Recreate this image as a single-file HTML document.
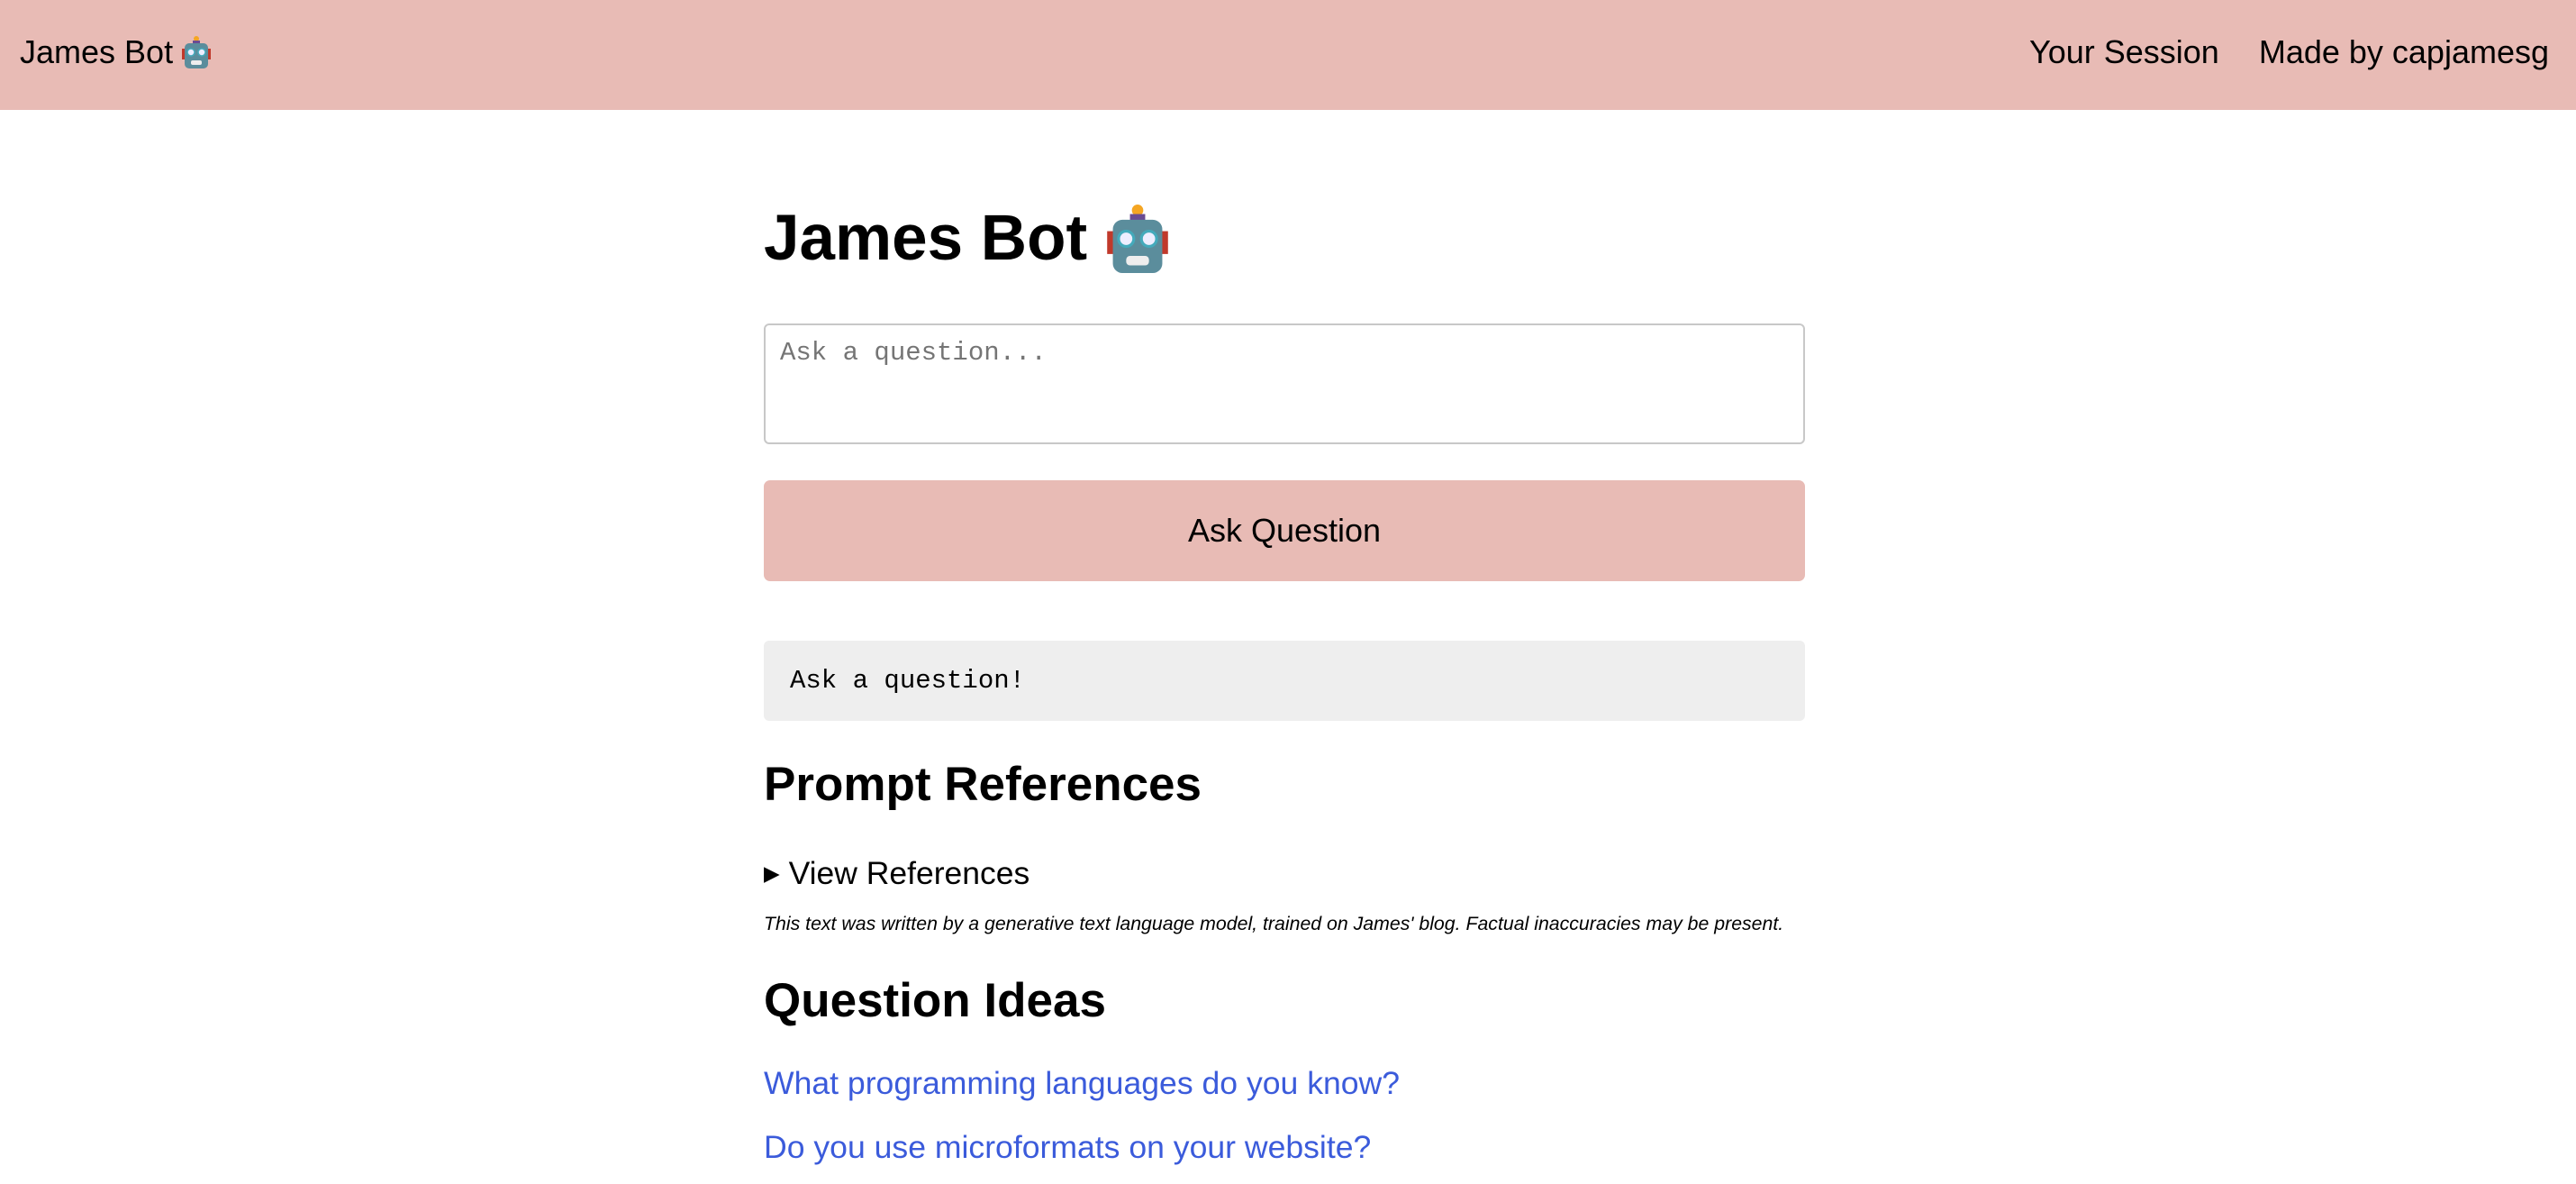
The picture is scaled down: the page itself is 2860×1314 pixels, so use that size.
<!DOCTYPE html>
<html><head><meta charset="utf-8"><style>
*{box-sizing:border-box}
body{margin:0;width:2860px;height:1314px;overflow:hidden;background:#fff;font-family:"Liberation Sans",Arial,sans-serif;color:#000}
header{height:122px;background:#e8bbb5;position:relative}
header .l{position:absolute;left:22px;top:37px;font-size:36px;display:flex;align-items:center;gap:10px}
header .r{position:absolute;right:30px;top:37px;font-size:36px}
header .r span{margin-left:44px}
main{position:absolute;left:848px;top:122px;width:1156px}
h1{font-size:71px;margin:0;position:absolute;top:102px;display:flex;align-items:center;gap:22px}
textarea{position:absolute;top:237px;left:0;width:1156px;height:134px;border:2px solid #c8c8c8;border-radius:6px;font-family:"Liberation Mono",monospace;font-size:29px;padding:14px 16px;resize:none;color:#777}
.btn{position:absolute;top:411px;left:0;width:1156px;height:112px;background:#e8bbb5;border-radius:7px;font-size:36px;display:flex;align-items:center;justify-content:center}
.out{position:absolute;top:589px;left:0;width:1156px;height:89px;background:#eee;border-radius:6px;font-family:"Liberation Mono",monospace;font-size:29px;padding:0 29px;display:flex;align-items:center}
h2{font-size:53px;margin:0;position:absolute;white-space:nowrap}
.det{position:absolute;top:827px;font-size:35.5px}
.disc{position:absolute;top:891px;font-size:21.3px;font-style:italic;white-space:nowrap}
a{position:absolute;color:#3b5bdb;text-decoration:none;font-size:35.6px;white-space:nowrap}
</style></head><body>
<header><div class="l">James Bot <svg width="32" height="36" viewBox="0 0 32 36"><rect x="13" y="0" width="6" height="6" rx="3" fill="#f5a623"/><rect x="12" y="5" width="8" height="4" fill="#6a4c93"/><rect x="0" y="14" width="4" height="12" fill="#c0392b"/><rect x="28" y="14" width="4" height="12" fill="#c0392b"/><rect x="3" y="8" width="26" height="28" rx="5" fill="#5b8d9c"/><circle cx="10" cy="18" r="4" fill="#eef" stroke="#4ab" stroke-width="1.5"/><circle cx="22" cy="18" r="4" fill="#eef" stroke="#4ab" stroke-width="1.5"/><rect x="10" y="27" width="12" height="5" rx="2" fill="#eee"/></svg></div>
<div class="r"><span>Your Session</span><span>Made by capjamesg</span></div></header>
<main>
<h1>James Bot <svg width="68" height="76" viewBox="0 0 32 36"><rect x="13" y="0" width="6" height="6" rx="3" fill="#f5a623"/><rect x="12" y="5" width="8" height="4" fill="#6a4c93"/><rect x="0" y="14" width="4" height="12" fill="#c0392b"/><rect x="28" y="14" width="4" height="12" fill="#c0392b"/><rect x="3" y="8" width="26" height="28" rx="5" fill="#5b8d9c"/><circle cx="10" cy="18" r="4" fill="#eef" stroke="#4ab" stroke-width="1.5"/><circle cx="22" cy="18" r="4" fill="#eef" stroke="#4ab" stroke-width="1.5"/><rect x="10" y="27" width="12" height="5" rx="2" fill="#eee"/></svg></h1>
<textarea placeholder="Ask a question..."></textarea>
<div class="btn">Ask Question</div>
<div class="out">Ask a question!</div>
<h2 style="top:718px">Prompt References</h2>
<div class="det"><span style="font-size:23px;vertical-align:4px">▶</span> View References</div>
<div class="disc">This text was written by a generative text language model, trained on James' blog. Factual inaccuracies may be present.</div>
<h2 style="top:958px">Question Ideas</h2>
<a style="top:1060px">What programming languages do you know?</a>
<a style="top:1131px">Do you use microformats on your website?</a>
</main>
</body></html>
